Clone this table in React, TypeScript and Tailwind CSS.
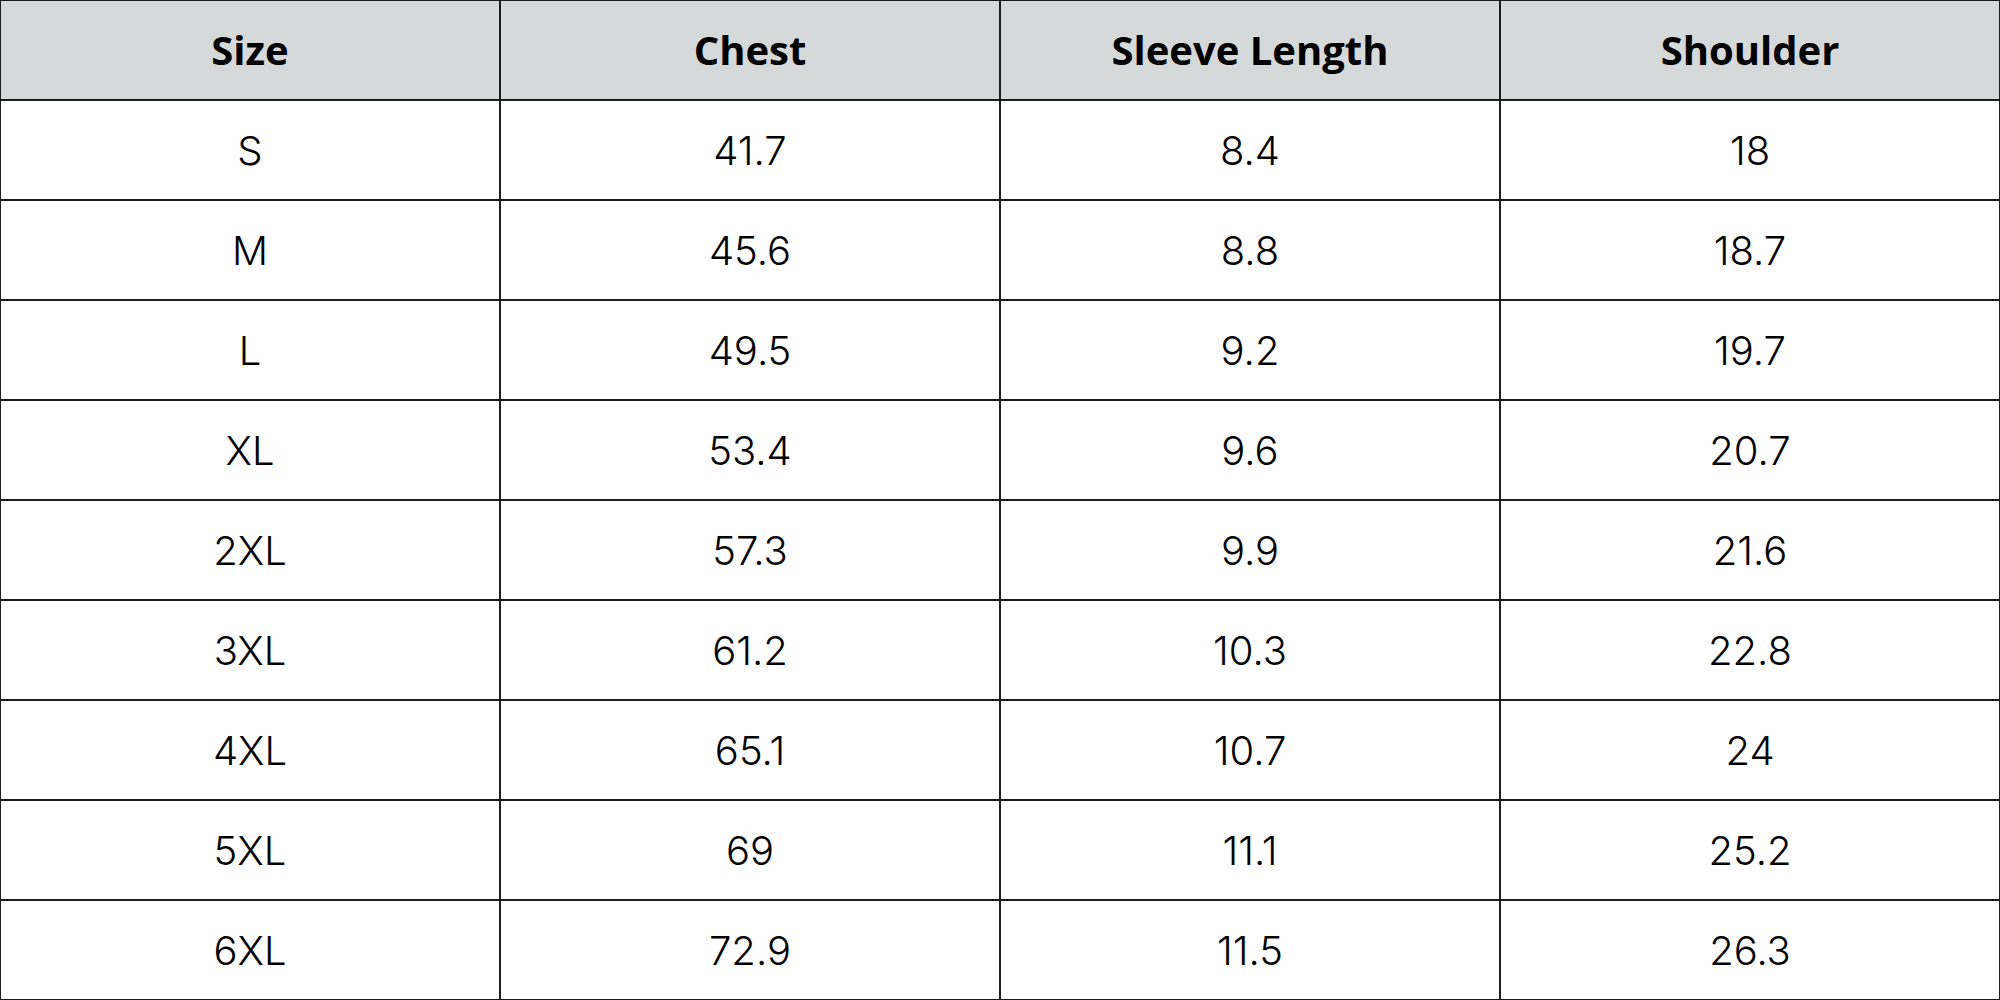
import React from "react";

const headers = ["Size", "Chest", "Sleeve Length", "Shoulder"];
const rows = [
  ["S", "41.7", "8.4", "18"],
  ["M", "45.6", "8.8", "18.7"],
  ["L", "49.5", "9.2", "19.7"],
  ["XL", "53.4", "9.6", "20.7"],
  ["2XL", "57.3", "9.9", "21.6"],
  ["3XL", "61.2", "10.3", "22.8"],
  ["4XL", "65.1", "10.7", "24"],
  ["5XL", "69", "11.1", "25.2"],
  ["6XL", "72.9", "11.5", "26.3"],
];

export default function App() {
  return (
    <div
      className="w-[2000px] h-[1000px] border border-[#1c1c1c] bg-[#1c1c1c] grid grid-cols-4 grid-rows-10 gap-[2px] text-black"
      style={{ fontFamily: '"Open Sans", "Noto Sans", sans-serif' }}
    >
      {headers.map((h) => (
        <div key={h} className="bg-[#d5d9da] flex items-center justify-center text-[40px] font-bold">
          {h}
        </div>
      ))}
      {rows.flatMap((r, i) =>
        r.map((c, j) => (
          <div
            key={`${i}-${j}`}
            className="bg-white flex items-center justify-center pt-[2px] text-[40px] font-light font-['Inter',sans-serif]"
          >
            {c}
          </div>
        ))
      )}
    </div>
  );
}
